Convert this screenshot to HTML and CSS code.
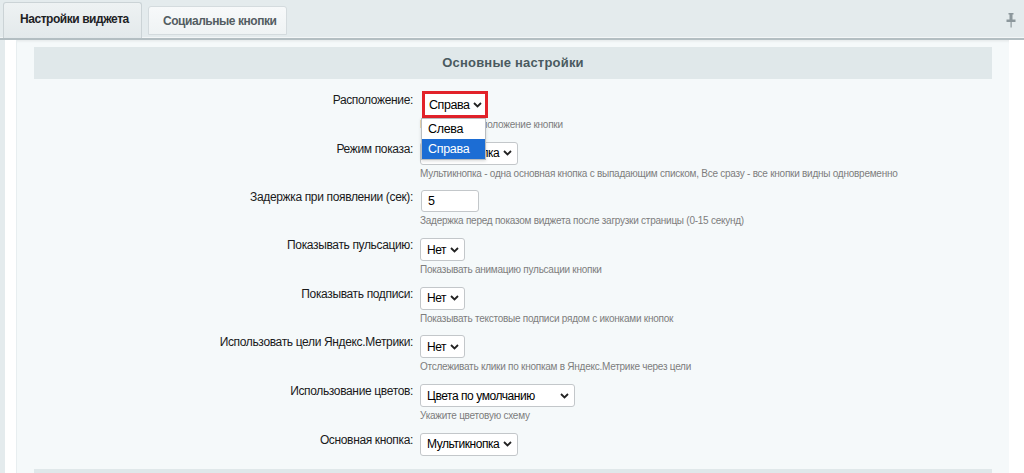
FILE: index.html
```html
<!DOCTYPE html>
<html lang="ru">
<head>
  <meta charset="UTF-8">
  <meta name="viewport" content="width=device-width, initial-scale=1.0">
  <title>Настройки виджета</title>
  <link rel="stylesheet" href="styles.css">
</head>
<body>
  <div class="tabs">
    <div class="tab tab-active">Настройки виджета</div>
    <div class="tab">Социальные кнопки</div>
    <span class="pin" title="Закрепить">
      <svg width="10" height="15" viewBox="0 0 10 15">
        <rect x="2.5" y="0" width="5" height="1.5" fill="currentColor"/>
        <rect x="3.5" y="1" width="3" height="6" fill="currentColor"/>
        <rect x="0.5" y="6.5" width="9" height="2.5" fill="currentColor"/>
        <rect x="4.5" y="8.5" width="1.2" height="6" fill="currentColor"/>
      </svg>
    </span>
  </div>

  <div class="content">
    <div class="panel">
      <div class="section-title">Основные настройки</div>

      <div class="form">
        <div class="row">
          <label class="row-label" for="position">Расположение:</label>
          <div class="row-field">
            <div class="select-wrap">
              <select id="position" class="select select-open w-pos">
                <option>Слева</option>
                <option selected>Справа</option>
              </select>
              <div class="dropdown">
                <div class="dropdown-item">Слева</div>
                <div class="dropdown-item dropdown-item-active">Справа</div>
              </div>
            </div>
            <div class="hint">Выберите расположение кнопки</div>
          </div>
        </div>

        <div class="row">
          <label class="row-label" for="mode">Режим показа:</label>
          <div class="row-field">
            <select id="mode" class="select w-mid">
              <option selected>Мультикнопка</option>
              <option>Все сразу</option>
            </select>
            <div class="hint">Мультикнопка - одна основная кнопка с выпадающим списком, Все сразу - все кнопки видны одновременно</div>
          </div>
        </div>

        <div class="row">
          <label class="row-label" for="delay">Задержка при появлении (сек):</label>
          <div class="row-field">
            <input id="delay" class="text-input" type="text" value="5">
            <div class="hint">Задержка перед показом виджета после загрузки страницы (0-15 секунд)</div>
          </div>
        </div>

        <div class="row">
          <label class="row-label" for="pulse">Показывать пульсацию:</label>
          <div class="row-field">
            <select id="pulse" class="select w-short">
              <option>Да</option>
              <option selected>Нет</option>
            </select>
            <div class="hint">Показывать анимацию пульсации кнопки</div>
          </div>
        </div>

        <div class="row">
          <label class="row-label" for="captions">Показывать подписи:</label>
          <div class="row-field">
            <select id="captions" class="select w-short">
              <option>Да</option>
              <option selected>Нет</option>
            </select>
            <div class="hint">Показывать текстовые подписи рядом с иконками кнопок</div>
          </div>
        </div>

        <div class="row">
          <label class="row-label" for="metrika">Использовать цели Яндекс.Метрики:</label>
          <div class="row-field">
            <select id="metrika" class="select w-short">
              <option>Да</option>
              <option selected>Нет</option>
            </select>
            <div class="hint">Отслеживать клики по кнопкам в Яндекс.Метрике через цели</div>
          </div>
        </div>

        <div class="row">
          <label class="row-label" for="colors">Использование цветов:</label>
          <div class="row-field">
            <select id="colors" class="select w-wide">
              <option selected>Цвета по умолчанию</option>
              <option>Свои цвета</option>
            </select>
            <div class="hint">Укажите цветовую схему</div>
          </div>
        </div>

        <div class="row row-last">
          <label class="row-label" for="main">Основная кнопка:</label>
          <div class="row-field">
            <select id="main" class="select w-mid">
              <option selected>Мультикнопка</option>
            </select>
          </div>
        </div>
      </div>

      <div class="section-title section-next"></div>
    </div>
  </div>
</body>
</html>
```

FILE: styles.css
```css
body {
  margin: 0;
  background: #e4ebed;
  font-family: "Liberation Sans", Arial, sans-serif;
  color: #000;
  overflow: hidden;
}

/* tabs */
.tabs {
  display: flex;
  align-items: flex-end;
  height: 38px;
  padding-left: 3px;
  border-bottom: 2px solid #b3bec2;
  box-shadow: inset 0 -1px 0 #f3f6f7;
}
.tab {
  box-sizing: border-box;
  width: 139px;
  height: 29px;
  margin: 0 0 3px 6px;
  padding: 6px 0 0 14px;
  font-size: 12px;
  line-height: 16px;
  font-weight: bold;
  letter-spacing: -0.45px;
  color: #535d62;
  background: linear-gradient(#f7f9fa, #eff3f4);
  border: 1px solid #d4dbde;
  border-radius: 3px 3px 0 0;
}
.tab-active {
  height: 36px;
  margin: 0;
  padding: 8px 0 0 16px;
  color: #1e2225;
  background: linear-gradient(#eef2f3, #e3e9eb);
  border-color: #cbd3d6;
  border-bottom: none;
}
.pin {
  margin: 0 8px 0 auto;
  align-self: center;
  padding-top: 3px;
  color: #8c979c;
  line-height: 0;
}

/* content */
.content {
  margin-left: 5px;
  padding: 0 15px 0 11px;
  background: #fff;
}
.panel {
  padding: 7px 17px 0 17px;
  background: #f5f9fa;
  border-left: 1px solid #e8eef0;
  box-shadow: inset 0 3px 3px -2px rgba(0, 0, 0, 0.08);
}
.section-title {
  height: 32px;
  line-height: 32px;
  background: #e0e8ea;
  text-align: center;
  font-size: 13px;
  font-weight: bold;
  letter-spacing: 0.2px;
  color: #4a5a60;
}
.section-next {
  height: 4px;
}

/* form */
.form {
  padding-top: 14px;
}
.row {
  display: flex;
  align-items: flex-start;
  padding-bottom: 9.7px;
}
.row-last {
  padding-bottom: 13px;
}
.row-label {
  width: 379px;
  margin-right: 7px;
  text-align: right;
  font-size: 12px;
  line-height: 14px;
  letter-spacing: -0.35px;
  color: #1a1a1a;
}
.row-field {
  flex: 1;
}
.hint {
  margin-top: 2px;
  font-size: 10px;
  line-height: 14px;
  letter-spacing: -0.25px;
  color: #7d7d7d;
}

.select {
  -webkit-appearance: none;
  appearance: none;
  box-sizing: border-box;
  display: block;
  height: 23px;
  margin: 0;
  padding: 0 14px 0 6px;
  font-family: "Liberation Sans", Arial, sans-serif;
  font-size: 12px;
  letter-spacing: -0.45px;
  color: #000;
  background: #fff url("data:image/svg+xml;utf8,<svg xmlns='http://www.w3.org/2000/svg' width='9' height='6' viewBox='0 0 9 6'><path d='M1 1l3.5 3.5L8 1' fill='none' stroke='%23222' stroke-width='1.8'/></svg>") no-repeat right 5px center;
  border: 1px solid #c3c7ca;
  border-radius: 3px;
}
.w-short { width: 45px; }
.w-mid { width: 98px; }
.w-wide { width: 155px; }
.w-pos { width: 62px; }

.select-open {
  padding-left: 4px;
  font-size: 12.5px;
  border-color: #e2222a;
  outline: 2px solid #e2222a;
  border-radius: 0;
  background-position: right 3px center;
}
.select-wrap {
  position: relative;
  width: 62px;
  margin-left: 4px;
}
.dropdown {
  position: absolute;
  left: -3px;
  top: 25px;
  width: 65px;
  box-sizing: border-box;
  background: #fff;
  border: 1px solid #b9bdc0;
  box-shadow: 0 1px 3px rgba(0, 0, 0, 0.15);
  z-index: 2;
}
.dropdown-item {
  height: 20px;
  line-height: 20px;
  padding-left: 6px;
  font-size: 12.5px;
  letter-spacing: -0.3px;
}
.dropdown-item-active {
  background: #1c6dd4;
  color: #fff;
}

.text-input {
  box-sizing: border-box;
  display: block;
  width: 58px;
  height: 22px;
  margin: 0 0 0 1px;
  padding: 0 6px;
  font-family: "Liberation Sans", Arial, sans-serif;
  font-size: 12.5px;
  color: #000;
  background: #fff;
  border: 1px solid #c3c7ca;
  border-radius: 3px;
}
```
